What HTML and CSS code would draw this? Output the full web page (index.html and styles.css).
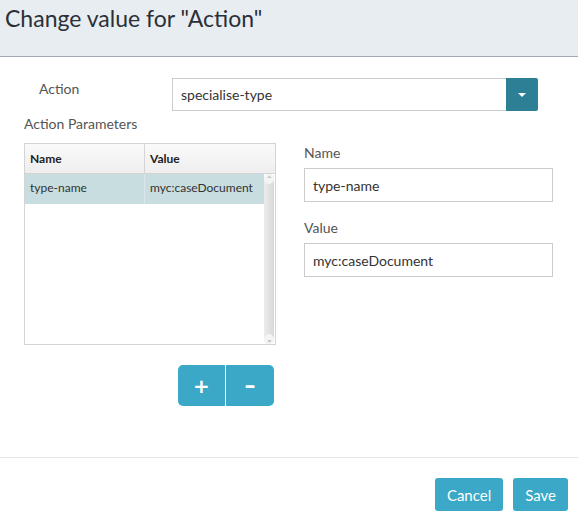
FILE: index.html
```html
<!DOCTYPE html>
<html lang="en">
<head>
    <meta charset="UTF-8">
    <title>Change value</title>
    <link rel="stylesheet" href="styles.css">
</head>
<body>
    <div class="modal-header">
        <h1>Change value for "Action"</h1>
    </div>

    <div class="modal-body">
        <!-- Action select -->
        <div class="action-row">
            <label class="action-label">Action</label>
            <div class="select">
                <div class="select-value">specialise-type</div>
                <div class="select-btn"><span class="caret"></span></div>
            </div>
        </div>

        <div class="params-title">Action Parameters</div>

        <div class="params">
            <div class="params-left">
                <div class="grid">
                    <div class="grid-head">
                        <div class="cell col-name">Name</div>
                        <div class="cell col-value">Value</div>
                    </div>
                    <div class="grid-body">
                        <div class="grid-rows">
                            <div class="grid-row selected">
                                <div class="cell col-name">type-name</div>
                                <div class="cell col-value">myc:caseDocument</div>
                            </div>
                        </div>
                        <div class="scrollbar">
                            <span class="arrow up">&#8963;</span>
                            <span class="arrow down">&#8964;</span>
                        </div>
                    </div>
                </div>
                <div class="btn-group">
                    <button class="btn-add">+</button>
                    <button class="btn-remove">&ndash;</button>
                </div>
            </div>

            <div class="params-right">
                <label class="field-label">Name</label>
                <input class="field" type="text" value="type-name">
                <label class="field-label">Value</label>
                <input class="field" type="text" value="myc:caseDocument">
            </div>
        </div>
    </div>

    <div class="modal-footer">
        <button class="button">Cancel</button>
        <button class="button">Save</button>
    </div>
</body>
</html>
```

FILE: styles.css
```css
body {
    margin: 0;
    font-family: Lato, "Liberation Sans", sans-serif;
    color: #333;
    background: #fff;
    width: 578px;
}

.modal-header {
    height: 57px;
    background-color: #e8edf1;
    border-bottom: 1px solid #a3a9b3;
    box-sizing: border-box;
    padding: 5px 5px 0;
}

.modal-header h1 {
    margin: 0;
    font-size: 23px;
    font-weight: normal;
    color: #2b3038;
    line-height: 26px;
}

.modal-body {
    height: 401px;
    padding: 21px 24px 0;
    box-sizing: border-box;
    font-size: 13px;
    border-bottom: 1px solid #e5e5e5;
}

.action-row {
    display: flex;
    align-items: flex-start;
}

.action-label {
    width: 148px;
    padding-left: 15px;
    padding-top: 2px;
    box-sizing: border-box;
    color: #555;
    font-size: 14px;
}

.select {
    display: flex;
    width: 366px;
    height: 33px;
}

.select-value {
    flex: 1;
    border: 1px solid #ccc;
    border-right: none;
    padding: 0 8px;
    line-height: 31px;
    font-size: 14px;
    color: #333;
}

.select-btn {
    width: 32px;
    background-color: #2d7f95;
    border-radius: 0 2px 2px 0;
    display: flex;
    align-items: center;
    justify-content: center;
}

.caret {
    width: 0;
    height: 0;
    border-left: 4px solid transparent;
    border-right: 4px solid transparent;
    border-top: 4px solid #fff;
}

.params-title {
    margin-top: 4px;
    font-size: 14px;
    color: #555;
}

.params {
    display: flex;
    margin-top: 11px;
}

.params-left {
    width: 252px;
}

.grid {
    border: 1px solid #d4d4d4;
    height: 202px;
    box-sizing: border-box;
    display: flex;
    flex-direction: column;
}

.grid-head {
    display: flex;
    height: 29px;
    background: linear-gradient(to bottom, #fafafa, #eeeeee);
    border-bottom: 1px solid #d4d4d4;
    font-weight: bold;
    font-size: 12px;
    color: #222;
}

.cell {
    padding: 0 5px;
    line-height: 29px;
    white-space: nowrap;
    overflow: hidden;
    box-sizing: border-box;
}

.col-name {
    width: 120px;
    border-right: 1px solid #d4d4d4;
}

.col-value {
    flex: 1;
}

.grid-body {
    flex: 1;
    display: flex;
}

.grid-rows {
    flex: 1;
}

.grid-row {
    display: flex;
    height: 30px;
    font-size: 12px;
    color: #333;
}

.grid-row .cell {
    line-height: 27px;
}

.grid-row .col-name {
    border-right-color: #dde6e7;
}

.grid-row.selected {
    background-color: #c8dde0;
}

.scrollbar {
    width: 10px;
    margin-right: 1px;
    background: linear-gradient(to right, #ececec, #d8d8d8);
    border-radius: 5px;
    position: relative;
}

.arrow {
    position: absolute;
    left: 0;
    width: 10px;
    height: 10px;
    border-radius: 5px;
    background: #f4f4f4;
    color: #999;
    font-size: 8px;
    line-height: 10px;
    text-align: center;
}

.arrow.up {
    top: 0;
}

.arrow.down {
    bottom: 0;
}

.btn-group {
    display: flex;
    margin: 20px 0 0 154px;
}

.btn-group button {
    width: 48px;
    height: 41px;
    border: none;
    background-color: #3aa8c6;
    color: #fff;
    font-family: "DejaVu Sans", sans-serif;
    font-size: 20px;
    font-weight: bold;
    padding: 0;
}

.btn-add {
    border-radius: 5px 0 0 5px;
    border-right: 1px solid #fff !important;
}

.btn-remove {
    border-radius: 0 5px 5px 0;
    font-size: 22px !important;
}

.params-right {
    margin-left: 28px;
    margin-top: 3px;
    width: 249px;
    display: flex;
    flex-direction: column;
}

.field-label {
    font-size: 14px;
    color: #555;
    margin-top: -1px;
    line-height: 16px;
}

.field {
    margin-top: 7px;
    height: 34px;
    border: 1px solid #ccc;
    padding: 0 8px;
    font-family: Lato, "Liberation Sans", sans-serif;
    font-size: 14px;
    color: #333;
    box-sizing: border-box;
    margin-bottom: 19px;
}

.modal-footer {
    display: flex;
    justify-content: flex-end;
    gap: 10px;
    padding: 20px 10px 0;
}

.button {
    height: 33px;
    padding: 0 12px;
    border: none;
    border-radius: 3px;
    background-color: #3aa8c6;
    color: #fff;
    font-family: Lato, "Liberation Sans", sans-serif;
    font-size: 15px;
}
```
